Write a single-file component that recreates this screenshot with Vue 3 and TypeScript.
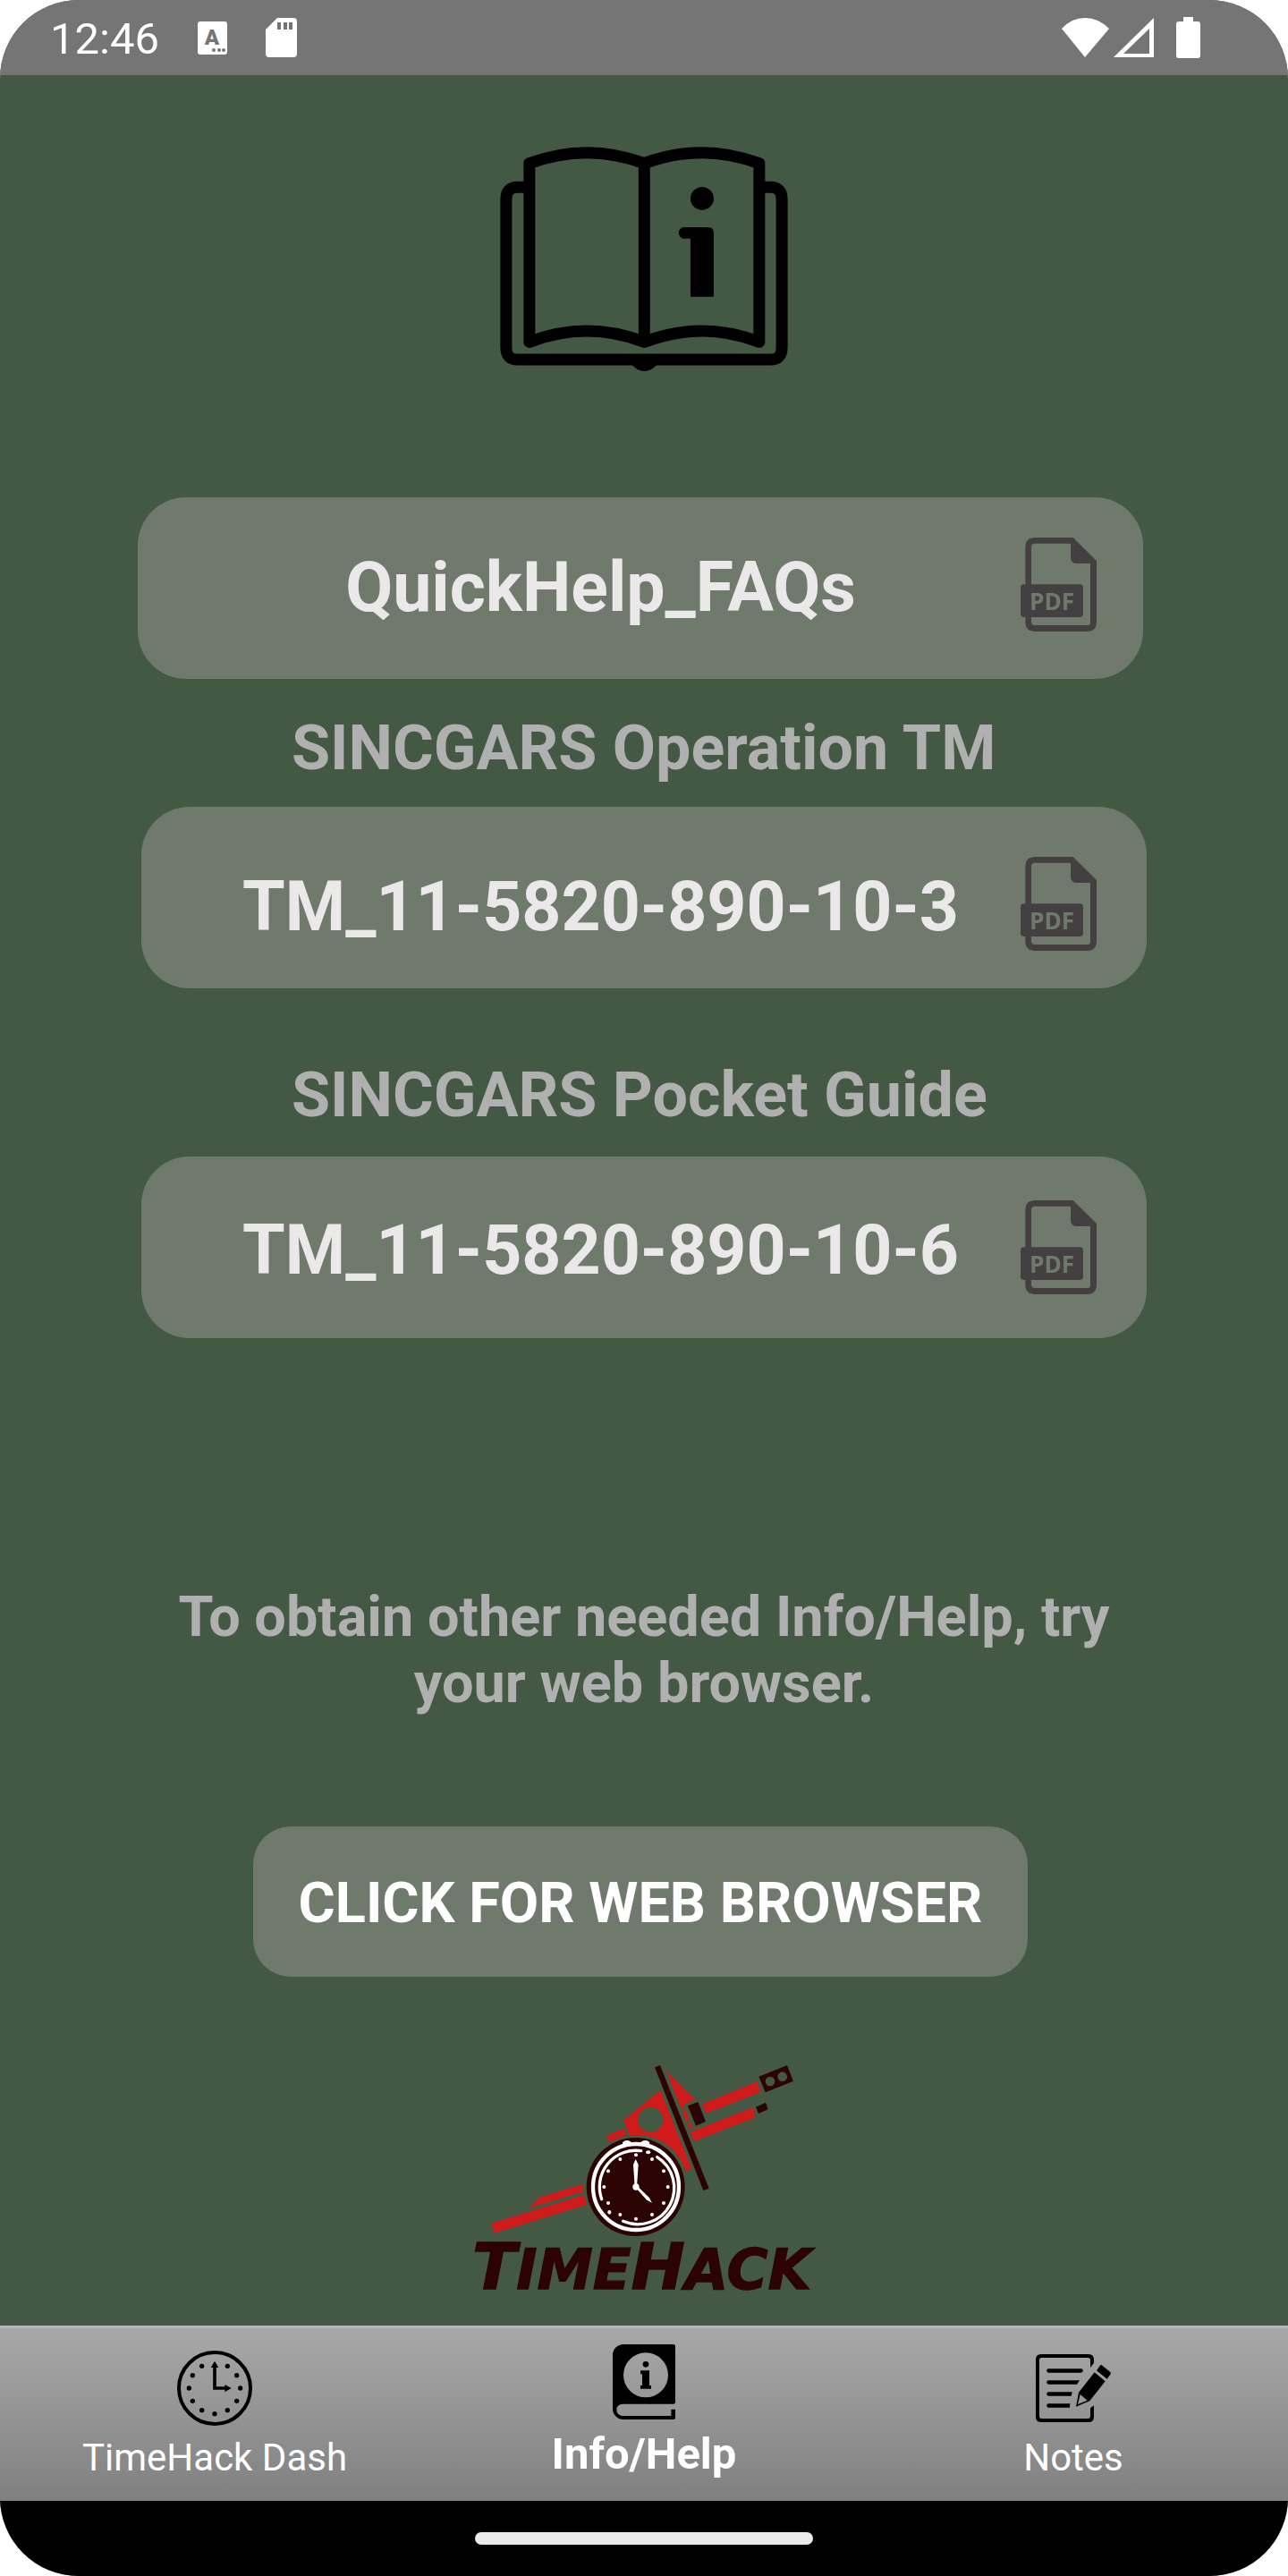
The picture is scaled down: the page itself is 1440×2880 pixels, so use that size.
<script setup lang="ts">
interface Manual {
  id: string
  title: string
  heading?: string
}

const manuals: Manual[] = [
  { id: 'faq', title: 'QuickHelp_FAQs' },
  { id: 'operation', title: 'TM_11-5820-890-10-3', heading: 'SINCGARS Operation TM' },
  { id: 'pocket', title: 'TM_11-5820-890-10-6', heading: 'SINCGARS Pocket Guide' },
]

interface Dot {
  x: number
  y: number
}

function dial(cx: number, cy: number, radius: number, skipTop: boolean): Dot[] {
  const dots: Dot[] = []
  for (let hour = skipTop ? 1 : 0; hour < 12; hour++) {
    const angle = (hour * Math.PI) / 6
    dots.push({
      x: Math.round(cx + radius * Math.sin(angle)),
      y: Math.round(cy - radius * Math.cos(angle)),
    })
  }
  return dots
}

const clockDots = dial(720, 270, 86, true)
const watchDots = dial(603, 465, 107, false)
</script>

<template>
  <div class="screen">
    <header class="status">
      <div class="status-left">
        <span class="time">12:46</span>
        <svg class="ime" viewBox="0 0 33 37" aria-hidden="true">
          <rect width="33" height="37" rx="3" fill="#fff" />
          <text x="16" y="26" text-anchor="middle" class="ime-letter">A</text>
          <g fill="#757575">
            <circle cx="18" cy="32" r="2" />
            <circle cx="24" cy="32" r="2" />
            <circle cx="29" cy="32" r="2" />
          </g>
        </svg>
        <svg class="sd" viewBox="0 0 35 44" aria-hidden="true">
          <path
            fill="#fff"
            fill-rule="evenodd"
            d="M13 0H31Q35 0 35 4V40Q35 44 31 44H4Q0 44 0 40V13ZM13 5V13H17V5ZM20 5V13H24V5ZM26 5V13H30V5Z"
          />
        </svg>
      </div>
      <div class="status-right">
        <svg class="wifi" viewBox="0 0 53 44" aria-hidden="true">
          <path fill="#fff" d="M0 12Q11 0 26 0T53 12L26 44Z" />
        </svg>
        <svg class="signal" viewBox="0 0 45 44" aria-hidden="true">
          <path fill="#fff" fill-rule="evenodd" d="M45 0V44H0ZM40 12L11 40H40Z" />
        </svg>
        <svg class="battery" viewBox="0 0 27 46" aria-hidden="true">
          <path
            fill="#fff"
            d="M8 0H19V5H24Q27 5 27 8V43Q27 46 24 46H3Q0 46 0 43V8Q0 5 3 5H8Z"
          />
        </svg>
      </div>
    </header>

    <main class="content">
      <svg class="guide" viewBox="57 72 966 754" role="img" aria-label="Information guide">
        <g fill="none" stroke="#000" stroke-width="39" stroke-linejoin="round">
          <path d="M155 128Q348 56 541 128Q734 56 927 128V728Q734 654 541 728Q348 654 155 728Z" />
          <path d="M541 128V728" />
          <path
            d="M155 208H116Q77 208 77 248V747Q77 787 116 787H964Q1003 787 1003 747V248Q1003 208 964 208H927"
          />
        </g>
        <path d="M500 804Q518 826 541 826T583 804Z" />
        <circle cx="735" cy="246" r="39" />
        <path d="M676 342H754Q774 342 774 362V576H696V381H676A19 19 0 0 1 676 342Z" />
      </svg>

      <section v-for="manual in manuals" :key="manual.id" :class="['manual', manual.id]">
        <h2 v-if="manual.heading" class="heading">{{ manual.heading }}</h2>
        <a class="card" :href="'#' + manual.id">
          <span class="card-title">{{ manual.title }}</span>
          <svg class="pdf" viewBox="93 93 255 315" aria-hidden="true">
            <path
              fill="#444041"
              fill-rule="evenodd"
              d="M142 93H269L348 171V375Q348 408 315 408H142Q109 408 109 375V126Q109 93 142 93ZM140 113Q129 113 129 124V376Q129 387 140 387H317Q327 387 327 377V180H283Q261 180 261 158V113Z"
            />
            <rect x="93" y="250" width="210" height="110" rx="11" fill="#444041" />
            <text x="198" y="336" text-anchor="middle" class="pdf-label">PDF</text>
          </svg>
        </a>
      </section>

      <p class="hint">To obtain other needed Info/Help, try your web browser.</p>

      <div class="action">
        <button type="button" class="browse">CLICK FOR WEB BROWSER</button>
      </div>

      <svg class="logo" viewBox="0 0 1260 870" role="img" aria-label="TimeHack">
        <g fill="#d11a1a">
          <path d="M118 587L429 492L438 524L127 620Z" />
          <path d="M242 537L283 499L427 455V480Z" />
          <path d="M504 293L563 269L571 291L512 315Z" />
          <path
            fill-rule="evenodd"
            d="M562 241L685 141L790 404L770 412A175 175 0 0 0 600 290L581 292ZM610 240A42 42 0 0 0 694 240A42 42 0 0 0 610 240Z"
          />
          <path d="M704 75L802 172L764 188L766 196L754 202Z" />
          <path d="M758 212L770 207L782 239L770 245Z" />
          <path d="M775 256L788 250L793 265L780 270Z" />
          <path d="M825 187L1010 112L1021 147L838 218Z" />
          <path d="M785 281L995 199L1004 232L796 313Z" />
        </g>
        <g fill="#2c0303">
          <path d="M666 64L684 57L848 470L829 477Z" />
          <path d="M777 193L811 180L837 246L804 260Z" />
          <path
            fill-rule="evenodd"
            d="M1015 95L1110 57L1131 110L1037 148ZM1037 111A16 16 0 0 0 1069 111A16 16 0 0 0 1037 111ZM1078 95A16 16 0 0 0 1110 95A16 16 0 0 0 1078 95Z"
          />
          <path d="M1005 197L1038 182L1046 205L1014 219Z" />
          <circle cx="602" cy="465" r="165" />
        </g>
        <g fill="none" stroke="#fff" stroke-linecap="round">
          <circle cx="603" cy="465" r="144" stroke-width="13" />
          <path d="M488 506A122 122 0 0 1 620 344" stroke-width="10" />
          <path d="M674 365A122 122 0 0 1 560 580" stroke-width="10" />
        </g>
        <g fill="#fff">
          <ellipse cx="573" cy="318" rx="15" ry="9" />
          <ellipse cx="634" cy="318" rx="15" ry="9" />
          <ellipse cx="644" cy="349" rx="8" ry="6" />
          <ellipse cx="514" cy="550" rx="6" ry="7" />
          <circle v-for="(dot, i) in watchDots" :key="i" :cx="dot.x" :cy="dot.y" r="6" />
          <path d="M602 372L611 390L606 465H599L594 390Z" />
          <path d="M602 467L608 463L647 500L657 519L638 508Z" />
          <circle cx="603" cy="465" r="11" />
        </g>
        <text x="54" y="808" class="wordmark">
          <tspan class="big">T</tspan><tspan>IME</tspan><tspan class="big">H</tspan><tspan>ACK</tspan>
        </text>
      </svg>
    </main>

    <nav class="tabs">
      <a class="tab" href="#dash">
        <svg class="tab-icon" viewBox="594 144 252 252" aria-hidden="true">
          <circle cx="720" cy="270" r="120" fill="none" stroke="#000" stroke-width="12" />
          <circle v-for="(dot, i) in clockDots" :key="i" :cx="dot.x" :cy="dot.y" r="8" />
          <path d="M720 195V270H760" fill="none" stroke="#000" stroke-width="11" />
          <path d="M707 201L720 179L733 201ZM754 258L776 270L754 283Z" />
        </svg>
        <span>TimeHack Dash</span>
      </a>
      <a class="tab active" href="#info" aria-current="page">
        <svg class="tab-icon" viewBox="594 123 252 252" aria-hidden="true">
          <path
            fill-rule="evenodd"
            d="M651 123H819Q825 123 825 129V317Q825 323 819 323H648A20 20 0 0 0 648 363H811V341H825V369Q825 375 819 375H651A36 36 0 0 1 615 339V159A36 36 0 0 1 651 123ZM651 226A75 75 0 0 0 801 226A75 75 0 0 0 651 226Z"
          />
          <circle cx="726" cy="190" r="10" />
          <path d="M708 211H738V261H744V272H708V261H714V223H708Z" />
        </svg>
        <span>Info/Help</span>
      </a>
      <a class="tab" href="#notes">
        <svg class="tab-icon" viewBox="594 144 252 252" aria-hidden="true">
          <path
            d="M777 201V176Q777 168 769 168H614Q606 168 606 176V364Q606 372 614 372H769Q777 372 777 364V337L789 328V366Q789 384 771 384H612Q594 384 594 366V174Q594 156 612 156H771Q789 156 789 174V186Z"
          />
          <path
            d="M637 205H746A6 6 0 0 1 746 218H637A6 6 0 0 1 637 205ZM637 244H741L732 257H637A6 6 0 0 1 637 244ZM637 283H716L713 296H637A6 6 0 0 1 637 283ZM637 322H709L708 335H637A6 6 0 0 1 637 322Z"
          />
          <path d="M798 211L809 195Q812 190 817 194L843 215Q848 219 844 224L833 239Z" />
          <path
            fill-rule="evenodd"
            d="M791 217L827 247L775 313L729 332L738 284ZM743 291L735 324L767 311Z"
          />
        </svg>
        <span>Notes</span>
      </a>
    </nav>

    <footer class="gesture"><div class="pill"></div></footer>
  </div>
</template>

<style>
body {
  margin: 0;
  background: #fff;
}
</style>

<style scoped>
.screen {
  display: flex;
  flex-direction: column;
  min-height: 100vh;
  overflow: hidden;
  border-radius: 88px;
  background: #445943;
  font-family: Roboto, "Liberation Sans", sans-serif;
}

svg {
  display: block;
  flex: none;
}

.status {
  display: flex;
  align-items: center;
  justify-content: space-between;
  height: 84px;
  padding: 0 98px 0 56px;
  background: #757575;
  color: #fff;
}

.status-left,
.status-right {
  display: flex;
  align-items: center;
}

.time {
  padding-top: 4px;
  font-size: 49px;
  line-height: 56px;
}

.ime {
  width: 33px;
  height: 37px;
  margin: 0 43px;
}

.ime-letter {
  font-size: 24px;
  font-weight: 900;
  fill: #757575;
}

.sd {
  width: 35px;
  height: 44px;
}

.wifi {
  width: 53px;
  height: 44px;
}

.signal {
  width: 45px;
  height: 44px;
  margin: 0 25px 0 5px;
}

.battery {
  width: 27px;
  height: 46px;
}

.content {
  display: flex;
  flex: 1;
  flex-direction: column;
  align-items: center;
  padding: 80px 158px 20px;
}

.guide {
  width: 322px;
  height: 251px;
  margin-bottom: 141px;
}

.manual {
  width: 100%;
  max-width: 1124px;
}

.faq {
  padding-right: 8px;
}

.operation {
  padding-top: 36px;
}

.pocket {
  padding-top: 78px;
}

.heading {
  max-width: 788px;
  margin: 0 auto 25px;
  color: #b0b0b0;
  font-size: 70px;
  font-weight: 700;
  line-height: 82px;
}

.pocket .heading {
  margin-bottom: 28px;
}

.card {
  display: flex;
  align-items: center;
  padding: 49px 56px 49px 44px;
  border-radius: 54px;
  background: #6f7a6d;
  color: #ebe8ea;
  text-decoration: none;
}

.faq .card {
  padding: 45px 52px 53px 48px;
}

.operation .card {
  padding: 56px 56px 42px 44px;
}

.card-title {
  flex: 1;
  padding-top: 6px;
  font-size: 77px;
  font-weight: 700;
  line-height: 90px;
  text-align: center;
}

.pdf {
  width: 85px;
  height: 105px;
}

.pdf-label {
  font-family: "Open Sans", "Noto Sans", sans-serif;
  font-size: 78px;
  font-weight: 700;
  fill: #6f7a6d;
}

.hint {
  max-width: 1124px;
  margin: 275px 0 123px;
  color: #b0b0b0;
  font-size: 63px;
  font-weight: 700;
  line-height: 74px;
  text-align: center;
}

.action {
  padding-right: 8px;
}

.browse {
  padding: 49px 51px 45px;
  border: 0;
  border-radius: 42px;
  background: #6f7a6d;
  color: #fff;
  font-family: inherit;
  font-size: 63px;
  font-weight: 700;
  line-height: 74px;
}

.logo {
  width: 420px;
  height: 290px;
  margin-top: 80px;
}

.wordmark {
  font-family: "DejaVu Sans", sans-serif;
  font-size: 188px;
  font-style: italic;
  font-weight: 700;
  fill: #2c0303;
  stroke: #2c0303;
  stroke-width: 4px;
}

.big {
  font-size: 216px;
}

.tabs {
  display: grid;
  grid-template-columns: repeat(3, 1fr);
  height: 196px;
  box-sizing: border-box;
  border-top: 3px solid #b8b8b8;
  background: linear-gradient(#a8a8a8, #808080);
}

.tab {
  display: flex;
  flex-direction: column;
  align-items: center;
  justify-content: flex-end;
  gap: 11px;
  padding-bottom: 24px;
  color: #fff;
  font-size: 42px;
  line-height: 49px;
  text-decoration: none;
}

.active {
  font-size: 49px;
  font-weight: 700;
  line-height: 56px;
}

.tab-icon {
  width: 84px;
  height: 84px;
}

.gesture {
  display: flex;
  justify-content: center;
  padding: 35px 0;
  background: #000;
}

.pill {
  width: 378px;
  height: 14px;
  border-radius: 7px;
  background: #eaeaea;
}
</style>
